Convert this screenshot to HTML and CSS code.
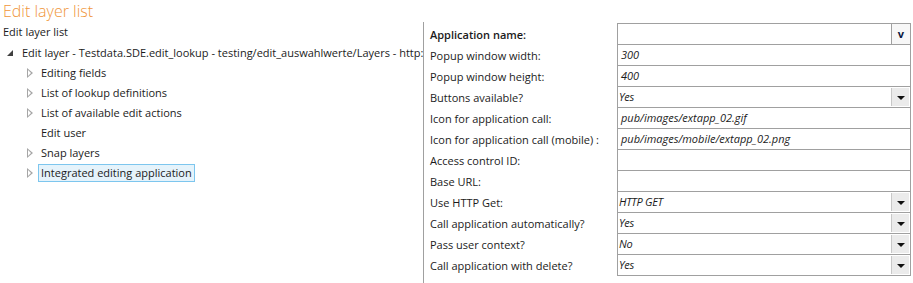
FILE: index.html
```
<!DOCTYPE html>
<html>
<head>
<meta charset="utf-8">
<link rel="stylesheet" href="styles.css">
</head>
<body>
<div class="title">Edit layer list</div>
<div class="main">
  <div class="left">
    <div class="sub">Edit layer list</div>
    <div class="tree">
      <div class="node root"><span class="tw open"></span><span class="lbl">Edit layer - Testdata.SDE.edit_lookup - testing/edit_auswahlwerte/Layers - http:</span></div>
      <div class="node child"><span class="tw closed"></span><span class="lbl">Editing fields</span></div>
      <div class="node child"><span class="tw closed"></span><span class="lbl">List of lookup definitions</span></div>
      <div class="node child"><span class="tw closed"></span><span class="lbl">List of available edit actions</span></div>
      <div class="node child"><span class="tw none"></span><span class="lbl">Edit user</span></div>
      <div class="node child"><span class="tw closed"></span><span class="lbl">Snap layers</span></div>
      <div class="node child"><span class="tw closed"></span><span class="lbl sel">Integrated editing application</span></div>
    </div>
  </div>
  <div class="right">
    <div class="form">
      <div class="lab bold">Application name:</div>
      <div class="fld first"><span class="val"></span><span class="vbtn">v</span></div>
      <div class="lab">Popup window width:</div>
      <div class="fld"><span class="val">300</span></div>
      <div class="lab">Popup window height:</div>
      <div class="fld"><span class="val">400</span></div>
      <div class="lab">Buttons available?</div>
      <div class="fld"><span class="val sm">Yes</span><span class="dd"></span></div>
      <div class="lab">Icon for application call:</div>
      <div class="fld"><span class="val">pub/images/extapp_02.gif</span></div>
      <div class="lab">Icon for application call (mobile) :</div>
      <div class="fld"><span class="val">pub/images/mobile/extapp_02.png</span></div>
      <div class="lab">Access control ID:</div>
      <div class="fld"><span class="val"></span></div>
      <div class="lab">Base URL:</div>
      <div class="fld"><span class="val"></span></div>
      <div class="lab">Use HTTP Get:</div>
      <div class="fld"><span class="val sm">HTTP GET</span><span class="dd"></span></div>
      <div class="lab">Call application automatically?</div>
      <div class="fld"><span class="val sm">Yes</span><span class="dd"></span></div>
      <div class="lab">Pass user context?</div>
      <div class="fld"><span class="val sm">No</span><span class="dd"></span></div>
      <div class="lab">Call application with delete?</div>
      <div class="fld"><span class="val sm">Yes</span><span class="dd"></span></div>
    </div>
  </div>
</div>
</body>
</html>
```
FILE: styles.css
```
html, body {
  margin: 0;
  padding: 0;
  background: #fff;
}
body {
  font-family: "Open Sans", "Noto Sans", "DejaVu Sans", sans-serif;
  font-size: 11px;
  color: #1b1b1b;
  width: 913px;
  height: 283px;
  overflow: hidden;
}
.title {
  color: #f0963a;
  font-size: 16px;
  line-height: 22px;
  height: 22px;
  padding-left: 3px;
  font-weight: 300;
}
.main {
  display: flex;
  height: 261px;
}
.left {
  width: 423px;
  overflow: hidden;
  white-space: nowrap;
}
.sub {
  padding-left: 3px;
  line-height: 20px;
}
.tree {
  padding-top: 1px;
}
.node {
  display: flex;
  align-items: center;
  height: 20px;
}
.node.root {
  padding-left: 6px;
}
.node.child {
  padding-left: 25px;
}
.tw {
  width: 16px;
  height: 20px;
  flex: none;
  position: relative;
}
.tw.open::before {
  content: "";
  position: absolute;
  left: 1px;
  top: 7px;
  width: 0;
  height: 0;
  border-left: 6px solid transparent;
  border-bottom: 6px solid #404040;
}
.tw.closed::before {
  content: "";
  position: absolute;
  left: 2px;
  top: 5px;
  width: 0;
  height: 0;
  border-top: 5px solid transparent;
  border-bottom: 5px solid transparent;
  border-left: 6px solid #a6a6a6;
}
.tw.closed::after {
  content: "";
  position: absolute;
  left: 3px;
  top: 7px;
  width: 0;
  height: 0;
  border-top: 3px solid transparent;
  border-bottom: 3px solid transparent;
  border-left: 3.6px solid #fff;
}
.lbl {
  padding: 0 2px;
  line-height: 16px;
  border: 1px solid transparent;
  margin-left: -3px;
}
.lbl.sel {
  background: #e5f3fb;
  border-color: #7dc6ee;
}
.right {
  flex: 1;
  border-left: 1px solid #a0a0a0;
  padding-left: 6px;
  padding-top: 2px;
}
.form {
  display: grid;
  grid-template-columns: 187px 294px;
}
.lab {
  height: 21px;
  line-height: 21px;
  white-space: nowrap;
}
.lab.bold {
  font-weight: 600;
}
.fld {
  height: 21px;
  box-sizing: border-box;
  border: 1px solid #a0a0a0;
  border-top: none;
  display: flex;
  align-items: stretch;
}
.fld.first {
  border-top: 1px solid #a0a0a0;
  height: 22px;
  margin-top: -1px;
}
.val {
  flex: 1;
  font-style: italic;
  padding-left: 3px;
  line-height: 20px;
}
.val.sm {
  padding-left: 1px;
  letter-spacing: -0.3px;
}
.dd {
  width: 17px;
  flex: none;
  background: #ebebeb;
  border-left: 1px solid #c8c8c8;
  position: relative;
  margin: 1px 1px 1px 0;
}
.dd::before {
  content: "";
  position: absolute;
  left: 5px;
  top: 8px;
  border-left: 4px solid transparent;
  border-right: 4px solid transparent;
  border-top: 4px solid #111;
}
.vbtn {
  width: 18px;
  flex: none;
  border-left: 1px solid #a0a0a0;
  background: #f7f7f7;
  font-weight: 700;
  text-align: center;
  line-height: 20px;
  color: #0a1840;
}
```
